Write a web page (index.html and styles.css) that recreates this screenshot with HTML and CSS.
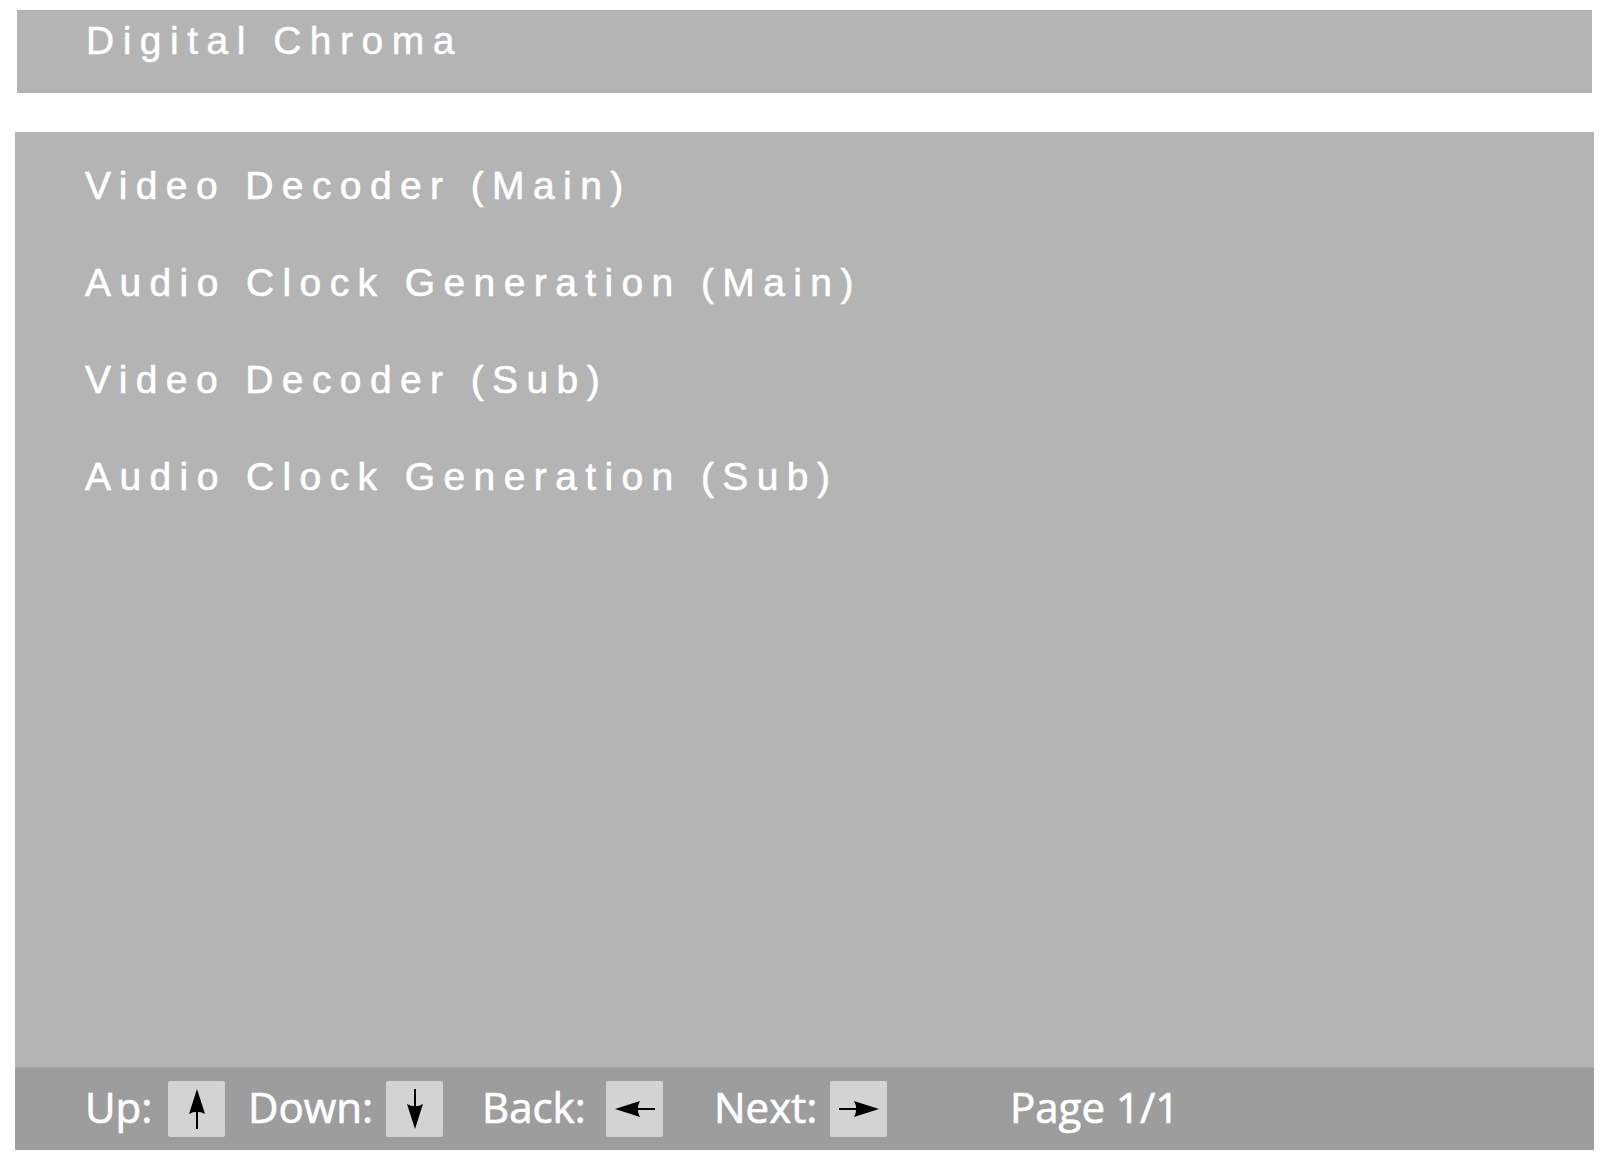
FILE: index.html
```html
<!DOCTYPE html>
<html lang="en">
<head>
    <meta charset="UTF-8">
    <title>Digital Chroma</title>
    <link rel="stylesheet" href="styles.css">
</head>
<body>
    <div class="title-bar">
        <h1>Digital Chroma</h1>
    </div>

    <div class="panel">
        <ul class="menu">
            <li>Video Decoder (Main)</li>
            <li>Audio Clock Generation (Main)</li>
            <li>Video Decoder (Sub)</li>
            <li>Audio Clock Generation (Sub)</li>
        </ul>

        <div class="footer">
            <span class="label label-up">Up:</span>
            <span class="key">
                <svg class="arrow" viewBox="0 0 40 40">
                    <path d="M20 0 L28 25 Q20 20.5 12 25 Z" />
                    <line x1="20" y1="18" x2="20" y2="40" />
                </svg>
            </span>
            <span class="label label-down">Down:</span>
            <span class="key">
                <svg class="arrow down" viewBox="0 0 40 40">
                    <path d="M20 0 L28 25 Q20 20.5 12 25 Z" />
                    <line x1="20" y1="18" x2="20" y2="40" />
                </svg>
            </span>
            <span class="label label-back">Back:</span>
            <span class="key">
                <svg class="arrow left" viewBox="0 0 40 40">
                    <path d="M20 0 L28 25 Q20 20.5 12 25 Z" />
                    <line x1="20" y1="18" x2="20" y2="40" />
                </svg>
            </span>
            <span class="label label-next">Next:</span>
            <span class="key">
                <svg class="arrow right" viewBox="0 0 40 40">
                    <path d="M20 0 L28 25 Q20 20.5 12 25 Z" />
                    <line x1="20" y1="18" x2="20" y2="40" />
                </svg>
            </span>
            <span class="page">Page 1/1</span>
        </div>
    </div>
</body>
</html>
```

FILE: styles.css
```css
body {
    margin: 0;
    background: #fff;
    font-family: 'Liberation Sans', Arial, sans-serif;
    color: #fff;
}
.title-bar {
    margin: 10px 0 0 17px;
    width: 1575px;
    height: 83px;
    box-sizing: border-box;
    padding: 7px 0 0 69px;
    background: #b4b4b4;
    border-top: 1px solid #adadad;
}
h1 {
    margin: 0;
    font-size: 39px;
    font-weight: normal;
    letter-spacing: 8.5px;
    line-height: 45px;
    -webkit-text-stroke: 0.5px #fff;
}
.panel {
    margin: 39px 0 0 15px;
    width: 1579px;
    height: 1018px;
    background: #b4b4b4;
    display: flex;
    flex-direction: column;
}
.menu {
    list-style: none;
    margin: 0;
    padding: 5px 0 0 70px;
    flex: 1;
}
.menu li {
    font-size: 39px;
    letter-spacing: 8.4px;
    line-height: 97px;
    -webkit-text-stroke: 0.6px #fff;
}
.footer {
    height: 83px;
    background: #9d9d9d;
    border-top: 1px solid #a8a8a8;
    box-sizing: border-box;
    display: flex;
    align-items: center;
    padding: 0 0 4px 70px;
    font-family: 'Open Sans', 'Noto Sans', sans-serif;
    font-size: 42px;
    -webkit-text-stroke: 0.7px #fff;
}
.label {
    line-height: 1;
}
.label-up {
    width: 83px;
}
.label-down {
    width: 138px;
    margin-left: 23px;
}
.label-back {
    width: 124px;
    margin-left: 39px;
}
.label-next {
    width: 116px;
    margin-left: 51px;
}
.key {
    width: 57px;
    height: 56px;
    background: #d3d3d3;
    border-radius: 2px;
    display: flex;
    align-items: center;
    justify-content: center;
    margin-top: 4px;
}
.arrow {
    width: 40px;
    height: 40px;
}
.arrow path {
    fill: #000;
}
.arrow line {
    stroke: #000;
    stroke-width: 2;
}
.arrow.down {
    transform: rotate(180deg);
}
.arrow.left {
    transform: rotate(-90deg);
}
.arrow.right {
    transform: rotate(90deg);
}
.page {
    margin-left: 123px;
    line-height: 1;
}
```
